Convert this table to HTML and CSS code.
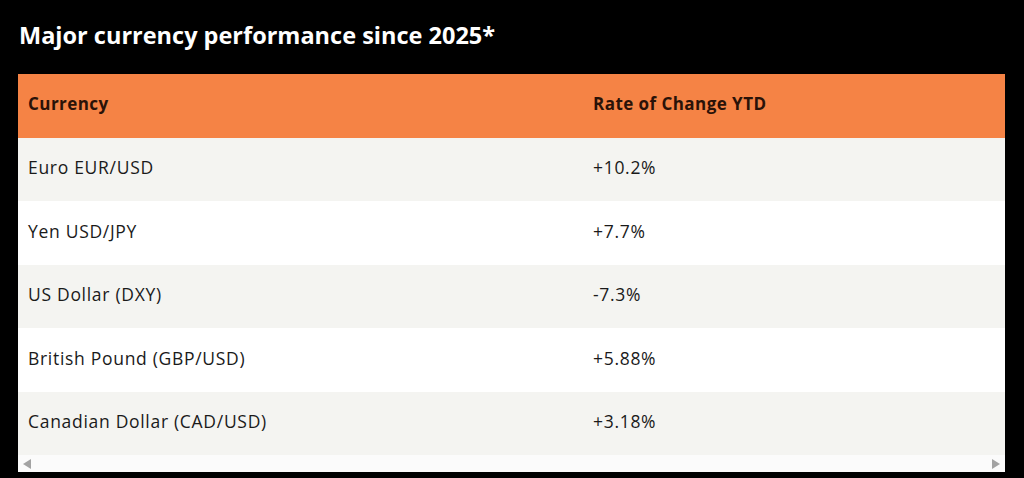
FILE: index.html
```html
<!DOCTYPE html>
<html lang="en">
<head>
<meta charset="utf-8">
<title>Major currency performance since 2025</title>
<link rel="stylesheet" href="styles.css">
</head>
<body>
<main class="page">
  <h2 class="title">Major currency performance since 2025*</h2>
  <div class="table-wrap">
    <table class="fx">
      <thead>
        <tr><th class="c1">Currency</th><th>Rate of Change YTD</th></tr>
      </thead>
      <tbody>
        <tr><td class="c1">Euro EUR/USD</td><td>+10.2%</td></tr>
        <tr><td class="c1">Yen USD/JPY</td><td>+7.7%</td></tr>
        <tr><td class="c1">US Dollar (DXY)</td><td>-7.3%</td></tr>
        <tr><td class="c1">British Pound (GBP/USD)</td><td>+5.88%</td></tr>
        <tr><td class="c1">Canadian Dollar (CAD/USD)</td><td>+3.18%</td></tr>
      </tbody>
    </table>
    <div class="hscroll">
      <span class="arrow left"></span>
      <span class="arrow right"></span>
    </div>
  </div>
</main>
</body>
</html>
```
FILE: styles.css
```css
html, body {
  margin: 0;
  padding: 0;
  background: #000;
}
.page {
  padding: 17px 19px 0 18px;
  font-family: "Open Sans", Lato, sans-serif;
}
.title {
  margin: 0 0 20px 1px;
  color: #fff;
  font-size: 23.5px;
  font-weight: 700;
  line-height: 37px;
}
.table-wrap {
  background: #fff;
}
.fx {
  width: 100%;
  border-collapse: collapse;
  table-layout: fixed;
}
.fx th, .fx td {
  height: 63.5px;
  box-sizing: border-box;
  padding: 0 10px 4px;
  text-align: left;
  font-size: 17.5px;
  letter-spacing: 0.7px;
  color: #1a1a1a;
}
.fx .c1 { width: 565px; }
.fx th {
  background: #f58345;
  color: #2a1208;
  font-weight: 700;
  font-size: 17px;
  letter-spacing: 0.45px;
}
.fx td { font-weight: 400; }
.fx tbody tr:nth-child(odd) td { background: #f4f4f1; }
.fx tbody tr:nth-child(even) td { background: #fff; }
.hscroll {
  height: 17px;
  background: #fbfbfb;
  display: flex;
  justify-content: space-between;
  align-items: center;
  padding: 0 5px;
}
.arrow {
  width: 0;
  height: 0;
  border-top: 5px solid transparent;
  border-bottom: 5px solid transparent;
}
.arrow.left { border-right: 8px solid #a3a3a3; }
.arrow.right { border-left: 8px solid #a3a3a3; }
```
